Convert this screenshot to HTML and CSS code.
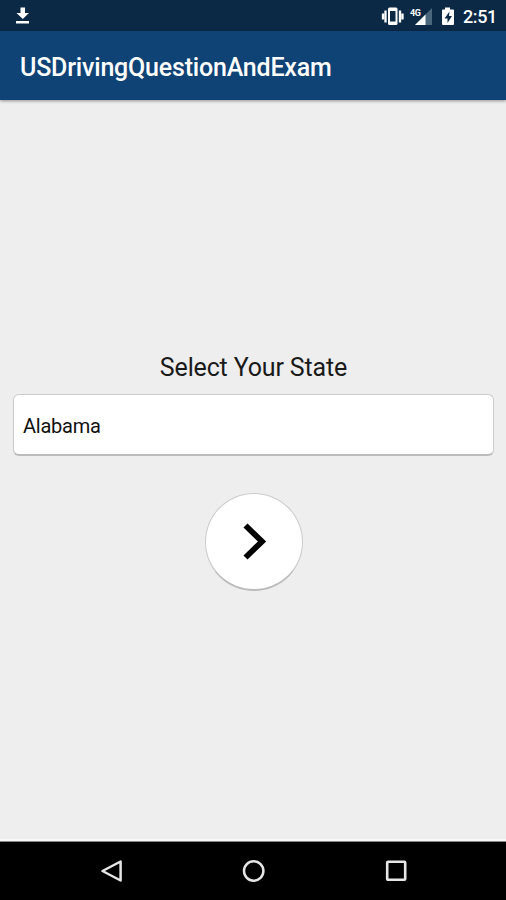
FILE: index.html
```html
<!DOCTYPE html>
<html lang="en">
<head>
<meta charset="utf-8">
<title>USDrivingQuestionAndExam</title>
<link rel="stylesheet" href="styles.css">
</head>
<body>
<div class="screen">
  <div class="status-bar">
    <svg class="download" width="14" height="18" viewBox="0 0 14 18"><path d="M4.500 0.500h4.500v5.500h4L6.800 12 0.500 6h4zM0 14h13v2.500H0z" fill="#fff"/></svg>
    <div class="status-right">
      <svg width="76" height="22" viewBox="0 0 76 22">
        <path d="M8.500 2.500h6.500a1.500 1.500 0 0 1 1.500 1.500v14.500a1.500 1.500 0 0 1-1.500 1.500H8.500A1.500 1.500 0 0 1 7 18.500V4A1.500 1.500 0 0 1 8.500 2.500zM9 6v10.500h5.500V6z" fill="#fff" fill-rule="evenodd"/>
        <path d="M4.500 5.500v12M19 5.500v12M2 8.500v6M21.500 8.500v6" stroke="#fff" stroke-width="2.300"/>
        <path d="M51 3v17H34z" fill="#49667c"/>
        <path d="M44.500 9.500V20H34z" fill="#fff"/>
        <text class="network" x="29" y="10.500">4G</text>
        <path d="M64 2.500h5v2h3a1 1 0 0 1 1 1V19a1 1 0 0 1-1 1H62a1 1 0 0 1-1-1V5.500a1 1 0 0 1 1-1h2z" fill="#fff"/>
        <path d="M68.500 6.500l-5 7h3v4.500l4.500-7h-3z" fill="#0b2945"/>
      </svg>
      <span class="clock">2:51</span>
    </div>
  </div>
  <header class="app-bar"><h1>USDrivingQuestionAndExam</h1></header>
  <main class="content">
    <label class="prompt">Select Your State</label>
    <div class="select">Alabama</div>
    <button class="next" aria-label="Next">
      <svg width="24" height="40" viewBox="0 0 24 40"><path d="M2.500 3.500L19 19.500 2.500 35.500" fill="none" stroke="#000" stroke-width="5.800"/></svg>
    </button>
  </main>
  <nav class="nav-bar">
    <svg width="24" height="26" viewBox="0 0 24 26"><path d="M20.600 3.500v19L2.500 13z" fill="none" stroke="#e6e6e6" stroke-width="2.500" stroke-linejoin="round"/></svg>
    <svg width="24" height="26" viewBox="0 0 24 26"><circle cx="11.700" cy="13" r="9.700" fill="none" stroke="#e6e6e6" stroke-width="2.500"/></svg>
    <svg width="24" height="26" viewBox="0 0 24 26"><rect x="3.200" y="3.700" width="18" height="18" rx="0.800" fill="none" stroke="#e6e6e6" stroke-width="2.600"/></svg>
  </nav>
</div>
</body>
</html>
```
FILE: styles.css
```css
* { box-sizing: border-box; }
body { margin: 0; font-family: Roboto, "Liberation Sans", sans-serif; }
svg { display: block; }
.screen { width: 506px; height: 900px; display: flex; flex-direction: column; background: #eee; }
.status-bar { height: 31px; flex: none; display: flex; justify-content: space-between; align-items: flex-start; padding: 5px 10px 0 16px; background: #0b2945; }
.download { margin-top: 2px; }
.status-right { display: flex; gap: 6px; }
.network { font-size: 9px; font-weight: 700; letter-spacing: -0.5px; fill: #fff; }
.clock { width: 33px; font-size: 18px; font-weight: 500; letter-spacing: -0.4px; line-height: 23px; color: #fff; white-space: nowrap; }
.app-bar { height: 69px; flex: none; display: flex; align-items: center; padding: 3px 20px 0; background: #0f4275; box-shadow: 0 1px 3px rgba(0,0,0,.4); }
.app-bar h1 { margin: 0; font-size: 25px; font-weight: 500; letter-spacing: -0.2px; color: #fff; white-space: nowrap; }
.content { flex: 1; display: flex; flex-direction: column; align-items: center; padding: 250px 12px 0 13px; }
.prompt { height: 44px; font-size: 25px; letter-spacing: -0.15px; line-height: 36px; color: #1a1a1a; white-space: nowrap; }
.select { width: 481px; height: 62px; padding: 3px 0 0 9px; display: flex; align-items: center; border: 1px solid #ccc; border-bottom: 2px solid #bbb; border-radius: 6px; background: #fff; font-size: 20px; letter-spacing: -0.25px; color: #111; }
.next { width: 98px; height: 98px; margin-top: 37px; padding: 0 0 0 2px; display: flex; align-items: center; justify-content: center; border: 1px solid #ccc; border-bottom: 2px solid #bbb; border-radius: 50%; background: #fff; }
.nav-bar { height: 58px; flex: none; display: flex; justify-content: space-between; padding: 16px 98px 0 100px; background: #000; box-shadow: 0 -1px 0 #888, 0 -3px 0 #f8f8f8; }
```
